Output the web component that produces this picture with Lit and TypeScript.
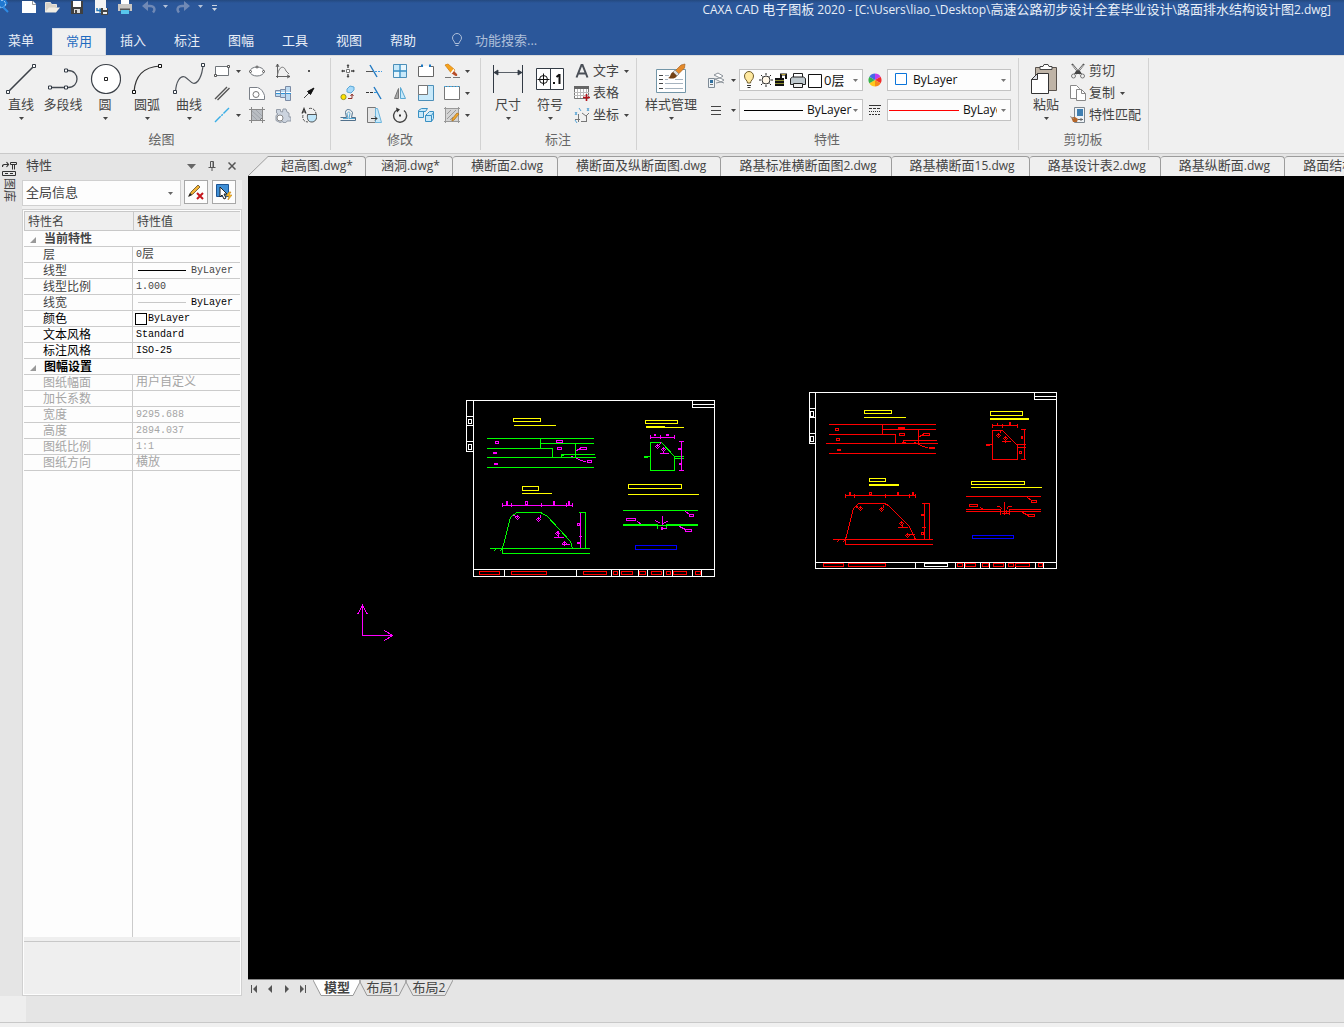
import { LitElement, html, svg, css, nothing, type TemplateResult } from "lit";
import { customElement, property } from "lit/decorators.js";

const shared = css`
  * { box-sizing: border-box; }
  button, select, input {
    font: inherit; color: inherit; background: none; border: 0; margin: 0; padding: 0; border-radius: 0;
  }
  select { appearance: none; outline: 0; }
  svg { display: block; flex: none; }
  .lat { font-size: 12px; }
`;

/* Latin runs are set slightly smaller than the CJK text around them. */
const mixed = (text: string) =>
  text.split(/([\x20-\x7e]+)/).filter(Boolean).map((part) =>
    /^[\x20-\x7e]+$/.test(part) ? html`<span class="lat">${part}</span>` : part);

const icon = (w: number, h: number, body: TemplateResult) =>
  html`<svg width=${w} height=${h} viewBox="0 0 ${w} ${h}" fill="none" stroke="#555" aria-hidden="true">${body}</svg>`;

const caret = (color = "#444") =>
  html`<svg class="caret" width="5" height="3" viewBox="0 0 5 3" aria-hidden="true"><path d="M0 0h5L2.500 3z" fill=${color}/></svg>`;

/* ---------- large icons, 32 x 32 ---------- */
const bigIcons: Record<string, TemplateResult> = {
  line: svg`<path d="M3 30L30 3" stroke="#3c4148" stroke-width="1.600"/><path d="M1.500 28.500h3v3h-3zM27.500 2.500h3v3h-3z" fill="#fff" stroke="#333b45"/>`,
  polyline: svg`<path d="M4 25.500h15M19 8.500h2c12 0 12 17 0 17h-2" stroke="#444a52" stroke-width="1.300"/><path d="M1.500 24h3v3h-3zM17.500 24h3v3h-3zM17.500 7h3v3h-3z" fill="#fff" stroke="#333b45"/>`,
  circle: svg`<circle cx="17" cy="17" r="14.500" fill="#fff" stroke="#3c4148" stroke-width="1.200"/><path d="M15.500 15.500h3v3h-3z" stroke="#222"/>`,
  arc: svg`<path d="M3 30C4 15 12 5 29 4" stroke="#333" stroke-width="1.200"/><path d="M1.500 28.500h3v3h-3zM27.500 2.500h3v3h-3z" fill="#fff" stroke="#111"/>`,
  spline: svg`<path d="M2.500 30C3 20 7 13 12 15c5 3 8 10 13 4 4-5 4-9 5-15" stroke="#50555c" stroke-width="1.200"/><path d="M.5 28.500h3v3h-3zM28.500 1.500h3v3h-3z" fill="#fff" stroke="#333b45"/>`,
  dimension: svg`<path d="M1.500 3v28M30.500 3v28" stroke="#333b45"/><path d="M2 10.500h28M6 8l-4 2.500 4 2.500zM26 8l4 2.500-4 2.500z" fill="#333b45" stroke="#333b45" stroke-width=".8"/>`,
  symbol: svg`<path d="M2.500 6.500h27v21h-27zM16.500 6.500v21" fill="#fff" stroke="#333b45"/><circle cx="9.500" cy="17.500" r="4" stroke="#111"/><path d="M3.500 17.500h12M9.500 11.500v12" stroke="#111"/><path d="M19 20h2v2h-2z" fill="#111" stroke="none"/><path d="M25.500 12v10M25.500 12.500l-3 2.500" stroke="#111" stroke-width="2"/>`,
  style: svg`<path d="M1.500 7.500h29v23h-29z" fill="#fff" stroke="#7396a8"/><path d="M4 13.500h4M4 17.500h4M4 21.500h4M4 26.500h4" stroke="#444"/><path d="M10 13.500h4M10 17.500h3M20 17.500h8M10 21.500h18M10 26.500h18" stroke="#a6b3bf"/><path d="M20 9l6-6 4-1-.5 4-6 6z" fill="#e58a2a" stroke="#9b5a1d" stroke-width=".6"/><path d="M20 8l4 4-2 2-4-4z" fill="#ddd" stroke="#777" stroke-width=".6"/><path d="M18 10l4 4c-2 3-5 3-9 2 3-1 2-5 5-6z" fill="#744217" stroke="none"/>`,
  paste: svg`<path d="M5.500 5.500h21v23h-21z" fill="#bfb4a7" stroke="#59524c"/><path d="M10 7.500V4.500h3l1-2h4l1 2h3v3z" fill="#fff" stroke="#444"/><path d="M7.500 11.500H18.500v20H1.500V17.500z" fill="#fff" stroke="#333"/><path d="M7.500 11.500v6h-6z" fill="#dcdfe6" stroke="#333"/>`,
};

/* ---------- small icons, 16 x 16 ---------- */
const smallIcons: Record<string, TemplateResult> = {
  rect: svg`<path d="M1.500 3.500h13v9h-13z" fill="#fff" stroke="#70757a"/><path d="M.5 11.500h2v2h-2zM13.500 2.500h2v2h-2z" fill="#fff" stroke="#555"/>`,
  ellipse: svg`<ellipse cx="8" cy="8.500" rx="7" ry="4.500" fill="#fff" stroke="#70757a"/><circle cx="1.500" cy="8.500" r="1" fill="#fff"/><circle cx="14.500" cy="8.500" r="1" fill="#fff"/><circle cx="8" cy="4" r="1" fill="#fff"/>`,
  formula: svg`<path d="M2.500 1v14M1 13.500h14M2.500 1l-1.500 3M2.500 1l1.500 3M15 13.500l-3-1.500M15 13.500l-3 1.500" stroke="#555" stroke-width=".9"/><path d="M2.500 12C4 3 9 2 11 8l3 3" stroke="#777"/>`,
  point: svg`<path d="M7 7h2v2H7z" fill="#555" stroke="none"/>`,
  parallel: svg`<path d="M1 14L13 2M3.500 15L15.500 3" stroke="#555" stroke-width="1.400"/>`,
  hole: svg`<path d="M.5 14.500v-12h8c4 1 6 5 7 8v4z" fill="#fff" stroke="#7b8088"/><circle cx="7" cy="9.500" r="3" stroke="#777"/>`,
  shaft: svg`<path d="M.5 5.500h5v-1h5v-3h5v14h-5v-3h-5v-1h-5z" fill="#bcd9f0" stroke="#7b8ba5"/><path d="M1 8.500h15" stroke="#2c93d8"/><path d="M1 7.500h15" stroke="#fff"/><path d="M5.500 5v7M10.500 3v11" stroke="#7b8ba5"/>`,
  arrow: svg`<path d="M3 13l7-7" stroke="#444"/><path d="M13 3L6.500 6.500l3 3z" fill="#111" stroke="#111"/>`,
  centerline: svg`<path d="M1 15L15 1" stroke="#3aaee6" stroke-width="1.400" stroke-dasharray="8 1 2 1"/>`,
  hatch: svg`<path d="M2.500 2.500h11v8l-3 3h-8z" fill="#b9bdc2" stroke="#777"/><path d="M0 2.500h16M2.500 0v16M13.500 0v16M0 13.500h16" stroke="#888"/><path d="M3 4l9 8M7 3l6 6M3 8l5 5" stroke="#9fa4ab"/>`,
  gear: svg`<path d="M1.500 2.500h4v2l2 .5.500-3h3l1 3 2 1v4h2v4h-4l-1 1.500H8v-1l-3 1-4-2V8.500l2-1.500-1.500-1z" fill="#ccd4df" stroke="#949ca8"/><circle cx="5" cy="11" r="3" fill="#fff" stroke="#888"/>`,
  partial: svg`<path d="M6.500 7.500h9c1 5-2 7.500-4.500 7.500-4 0-5-3-4.500-7.500z" fill="#bfe6fa" stroke="#444" stroke-width=".9"/><path d="M2 8c-1 4 1 7 5 7M8 1.500c4-1 7 2 7 6" stroke="#555" stroke-dasharray="3 1"/><path d="M1 6.500l2-5 2 5M2 5h2" stroke="#333" stroke-width="1.200"/>`,
  move: svg`<path d="M6.500 6.500h3v3h-3z" fill="#fff" stroke="#777"/><path d="M8 2v3M8 11v3M2 8h3M11 8h3" stroke="#444" stroke-width="1.400"/><path d="M6.500 3L8 1l1.500 2zM6.500 13L8 15l1.500-2zM3 6.500L1 8l2 1.500zM13 6.500L15 8l-2 1.500z" fill="#444" stroke="none"/>`,
  trim: svg`<path d="M0 8.500h7" stroke="#555"/><path d="M9 8.500h7" stroke="#419be2" stroke-dasharray="2 1"/><path d="M4 2l7 12" stroke="#1f78c1" stroke-width="1.400"/>`,
  array: svg`<path d="M1.500 1.500h13v13h-13z" fill="#c8e9fa" stroke="#4c8fb8"/><path d="M9 2h5v5H9zM2 9h5v5H2z" fill="#e8f6fd" stroke="none"/><path d="M8 1v14M1 8h14" stroke="#398fc4" stroke-width="1.300"/>`,
  breakline: svg`<path d="M3 3.500H.5v10h15v-10H13" fill="#fff" stroke="#666"/><path d="M3 4V1.500h2V4zM11 4V1.500h2V4z" fill="#1f78c1" stroke="none"/><path d="M6 3.500h4" stroke="#fff"/>`,
  erase: svg`<path d="M1 2l3-1 7 6-3 4z" fill="#f6a31d" stroke="#d68213" stroke-width=".8"/><path d="M10 8l3 3c1 2-1 3-3 1l-3-2z" fill="#b84d28" stroke="none"/><path d="M10 6.500l-3 4" stroke="#fff" stroke-width="1.500"/><path d="M1 14.500h6M9 14.500h7" stroke="#777"/>`,
  copy: svg`<circle cx="3.500" cy="12" r="2.600" fill="#ffe100" stroke="#93932a"/><path d="M7 4l3-3 4 1v3l-3 3-4-1z" fill="#a6dafa" stroke="#5ba8d8"/><path d="M8 13.500h4V10M10.500 11l1.500-2 1.500 2" stroke="#8f302b"/>`,
  extend: svg`<path d="M0 7.500h8" stroke="#333" stroke-dasharray="3 1"/><path d="M8 2l7 12" stroke="#1f78c1" stroke-width="1.400"/><path d="M8 7.500h3" stroke="#3597dc"/>`,
  mirror: svg`<path d="M6.500 3.500v10H2.500z" fill="#aaa" stroke="#777"/><path d="M8.500 2.500v11h5z" fill="#c8e9fa" stroke="#58a8d3"/>`,
  scale: svg`<path d="M.5 .5h15v15h-15z" fill="#c8e9fa" stroke="#4c8fb8"/><path d="M.5 .5h9v9h-9z" fill="#fff" stroke="#777"/>`,
  boundary: svg`<path d="M.5 1.500h15v13h-15z" fill="#fff" stroke="#777"/><path d="M0 1.500h16" stroke="#4ca8dd" stroke-dasharray="2 1"/>`,
  offset: svg`<path d="M.5 13.500h15v-3h-4l1-5c-2-4-7-4-7 0l1 5h-6" stroke="#51708b"/><path d="M3 11.500h5l-1-5c1-2 3-2 3 0l-1 5h6" stroke="#58a8d3"/>`,
  stretch: svg`<path d="M1.500 .5h8v15h-8z" fill="#e5e5e5" stroke="#777"/><path d="M9.500 1.500h2l4 14h-6z" fill="#c8e9fa" stroke="#6cb4dc"/><path d="M5 11.500h6M9 9.500l2 2-2 2" stroke="#333"/>`,
  rotate: svg`<path d="M12 3.500a6.500 6.500 0 1 1-7-.5" stroke="#444" stroke-width="1.400"/><path d="M4 .5l4 2-3 3z" fill="#333" stroke="none"/><path d="M7 7.500h2v2H7z" fill="#333" stroke="none"/>`,
  explode: svg`<path d="M.5 3.500l3-2h6l-2 3h-7zM.5 4.500h5v6h-5zM9.500 6.500l2-2h4v7l-2 3h-6v-6z" fill="#c8e9fa" stroke="#3990c3"/><path d="M7.500 8.500h6v6M13.500 8.500l2-3" stroke="#3990c3"/>`,
  editHatch: svg`<path d="M1.500 1.500h13v13h-13z" fill="#d3d3d3" stroke="#777"/><path d="M0 1.500h16M0 14.500h16M1.500 0v16M14.500 0v16" stroke="#999"/><path d="M3 7l4-4M3 12l9-9M6 13l3-3" stroke="#999"/><path d="M8 12l5-6 2 1-5 6-2 1z" fill="#f3a72a" stroke="#a97423" stroke-width=".8"/>`,
  text: svg`<path d="M2.500 14.500L7.500 2h1l5 12.500M4.500 10.500h7" stroke="#4a4f57" stroke-width="2"/>`,
  grid: svg`<path d="M.5 1.500h14v12h-14z" fill="#fff" stroke="#777"/><path d="M0 1h15v3H0z" fill="#666" stroke="none"/><path d="M3.500 4v9M6.500 4v9M9.500 4v9M12.500 4v9M0 7.500h15M0 10.500h15" stroke="#bbb"/><path d="M12.500 9v7M9 12.500h7" stroke="#b3141b" stroke-width="1.600"/>`,
  coords: svg`<path d="M4.500 7v8M1 12.500h5M8 6l4 3 3-3M12.500 9v6M7 14.500h6" stroke="#777"/><path d="M1 5l2 3M3 5L1 8M5 1l2 3M13 1l2 3M15 1l-2 3M1 13l2 3" stroke="#55a3d5"/>`,
  layers: svg`<path d="M6 3l4-2 5 3-3 2zM7 7l5-1 4 2-3 2zM8 11l5-1 3 1" fill="#fff" stroke="#8b9299"/><path d="M.5 6.500h6v9h-6z" fill="#edf3f7" stroke="#7f8b96"/><path d="M2 8h3v3H2z" fill="#2f6f9f" stroke="none"/><path d="M2 12.500h3" stroke="#777"/>`,
  weights: svg`<path d="M3 4.500h10M3 8.500h10M3 12.500h10" stroke="#444" stroke-width="1.200"/>`,
  linetypes: svg`<path d="M2 3.500h12" stroke="#333"/><path d="M2 6.500h12" stroke="#333" stroke-dasharray="3 1"/><path d="M2 9.500h12" stroke="#333" stroke-dasharray="1 1"/><path d="M2 12.500h12" stroke="#333" stroke-dasharray="2 1"/>`,
  wheel: svg`<g stroke="none"><path d="M8 8V1.500A6.500 6.500 0 0 1 13.600 4.700z" fill="#c03cf0"/><path d="M8 8l5.600-3.300a6.500 6.500 0 0 1 0 6.600z" fill="#f22b2b"/><path d="M8 8l5.600 3.300A6.500 6.500 0 0 1 8 14.500z" fill="#f78a1b"/><path d="M8 8v6.500a6.500 6.500 0 0 1-5.600-3.200z" fill="#ffc91a"/><path d="M8 8l-5.600 3.300a6.500 6.500 0 0 1 0-6.600z" fill="#35b44a"/><path d="M8 8L2.400 4.700A6.500 6.500 0 0 1 8 1.500z" fill="#4468e8"/></g>`,
  cut: svg`<path d="M2 1l8 10M14 1L6 11" stroke="#555" stroke-width="2"/><path d="M2.500 2l6 7M13.500 2l-6 7" stroke="#eee" stroke-width=".8"/><circle cx="3.500" cy="13" r="2" stroke="#777"/><circle cx="12.500" cy="13" r="2" stroke="#777"/><path d="M6 8l2-1 2 1 2 3H4z" fill="#444" stroke="none"/>`,
  duplicate: svg`<path d="M.5 .5h6l3 3v10h-9z" fill="#fff" stroke="#888"/><path d="M6.500 4.500h5l4 4v7h-9z" fill="#fff" stroke="#888"/><path d="M11.500 4.500v4h4" stroke="#888"/>`,
  match: svg`<path d="M4.500 .5h10v15h-10z" fill="#eef3f7" stroke="#7b858e"/><path d="M7 2h6v7H7z" fill="#3f7fb2" stroke="none"/><path d="M8 12.500h5M11 11v3" stroke="#666"/><path d="M1 10l4 0 3 2-1 3-4 0z" fill="#b4662a" stroke="none"/><path d="M0 9.500l4 2" stroke="#999"/>`,
};

const big = (name: string) => icon(32, 32, bigIcons[name]);
const small = (name: string) => icon(16, 16, smallIcons[name]);

/* ---------- title bar and ribbon ---------- */
@customElement("ribbon-bar")
class RibbonBar extends LitElement {
  static styles = [shared, css`
    :host { display: block; color: #444; background: #f0f0f0; }
    .top { background: #2b579a; color: #e8eef7; }
    .title { display: flex; height: 27px; overflow: hidden; padding-right: 13px; background: linear-gradient(#24497f, #2b579a 3px); }
    .quick { flex: 1; }
    .title h1 { margin: 0; font-size: 13px; line-height: 18px; font-weight: 400; white-space: nowrap; }
    .menu { display: flex; height: 28px; }
    .menu button { width: 54px; height: 28px; padding-bottom: 4px; }
    .menu .first { width: 42px; margin-right: 10px; }
    .menu .on { background: #f0f0f0; color: #1e6bc0; border: 1px solid #d5dbe4; border-bottom: 0; margin-top: 1px; height: 27px; padding-bottom: 4px; }
    .search { display: flex; align-items: center; gap: 11px; margin-left: 20px; padding-bottom: 2px; color: #aebfd9; flex: 1; }
    .search input { width: 160px; outline: 0; }
    .search input::placeholder { color: #aebfd9; opacity: 1; }
    .ribbon { display: flex; height: 99px; border-top: 1px solid #dadbdc; border-bottom: 1px solid #c9c9c9; padding-top: 2px; }
    .group { display: flex; flex-direction: column; height: 92px; border-right: 1px solid #d2d2d2; padding: 0 7px 0 6px; }
    .group:first-child { padding-left: 0; }
    .group.icons { padding: 0 15px 0 4px; }
    .group h2 { margin: 0; font-size: 13px; font-weight: 400; line-height: 20px; color: #666; text-align: center; margin-top: 1px; }
    .tools { display: flex; height: 70px; }
    .big { width: 42px; height: 70px; display: flex; flex-direction: column; align-items: center; padding-top: 4px; line-height: 20px; white-space: nowrap; }
    .big .caret { margin: 3px 0 0; }
    .big.wide { width: 56px; }
    .grid { display: grid; grid-template-columns: repeat(5, 26px); grid-template-rows: repeat(3, 22px); padding-top: 2px; align-items: center; }
    .grid button { display: flex; align-items: center; gap: 5px; height: 22px; padding-left: 5px; white-space: nowrap; }
    .draw { grid-template-columns: 35px repeat(3, 26px); }
    .draw button { padding-left: 4px; gap: 6px; }
    .list { display: flex; flex-direction: column; padding: 2px 0 0 3px; }
    .list button { display: flex; align-items: center; height: 22px; gap: 3px; white-space: nowrap; line-height: 18px; }
    .list span { padding-bottom: 3px; }
    .list .caret { margin-left: 2px; }
    .props { display: grid; grid-template-columns: 31px 124px 24px 124px; align-content: start; row-gap: 8px; padding: 11px 0 0 9px; height: 70px; }
    .props > * { height: 22px; }
    .props button { display: flex; align-items: center; gap: 7px; }
    .props .mid { justify-content: center; }
    .combo { display: flex; align-items: center; border: 1px solid #c3c3c3; background: #fdfdfd; color: #111; padding: 0 4px; overflow: hidden; }
    .combo select { flex: 1; min-width: 0; padding: 0 0 1px 3px; height: 20px; font-size: 12px; }
    .combo .clip { max-width: 37px; }
    .combo .caret { margin-left: auto; }
    .combo .full { font-size: 13px; padding-left: 2px; }
  `];

  big(name: string, label: string, arrow = true, wide = false) {
    return html`<button class="big ${wide ? "wide" : ""}">${big(name)}<span>${label}</span>${arrow ? caret() : nothing}</button>`;
  }
  small(name: string, label: string, arrow = false) {
    return html`<button title=${label} aria-label=${label}>${small(name)}${arrow ? caret() : nothing}</button>`;
  }
  row(name: string, label: string, arrow = false) {
    return html`<button>${small(name)}<span>${label}</span>${arrow ? caret() : nothing}</button>`;
  }

  render() {
    const tabs = ["插入", "标注", "图幅", "工具", "视图", "帮助"];
    return html`
      <header class="top">
        <div class="title">
          <div class="quick">
            <svg width="220" height="16" viewBox="0 0 220 16" fill="none" role="img" aria-label="快速启动工具栏">
              <path d="M0 0h6l2 3-3 4-5 2z" fill="#1f78d1"/><circle cx="2" cy="4" r="3.500" stroke="#bfe1ff" stroke-dasharray="2 1"/><path d="M3 7l5 5" stroke="#2d8be6" stroke-width="2"/>
              <path d="M22 1h11l3 3v9H22z" fill="#fff"/><path d="M32.500 1v3.500H36" stroke="#999"/>
              <path d="M45.500 12V2.500h5l1 2h5v3" fill="#d8d2c7" stroke="#e8e4dc"/><path d="M45 12.500l4-5h11l-4 5z" fill="#f2eee4"/>
              <path d="M71 1h12v13H71z" fill="#404040"/><path d="M73 1h8v6h-8z" fill="#fff"/><path d="M74 9h6v4h-6z" fill="#ddd"/><path d="M75 10h2v3h-2z" fill="#444"/>
              <path d="M95 0h11v13H95z" fill="#f3f3f3"/><path d="M97 8v2.500h4M99.500 8.500l2 2-2 2" stroke="#2678b8" stroke-width="1.500"/><path d="M101 8h7v7h-7z" fill="#444"/><path d="M103 8h4v2h-4zM103 12h4v2h-4z" fill="#eee"/>
              <path d="M121 0h8v4h-8z" fill="#fff"/><path d="M118 4h14v7h-14z" fill="#c9c6c2"/><path d="M120 9.500h10" stroke="#555" stroke-width="2"/><path d="M121 10h8v4h-8z" fill="#58c6ec"/>
              <g fill="none" stroke="#7089b5" stroke-width="2.400"><path d="M146 6h4c4 0 6 3 3 6.500"/><path d="M186 6h-4c-4 0-6 3-3 6.500"/></g>
              <path d="M142 6l6-5v10zM190 6l-6-5v10z" fill="#7089b5"/>
              <path d="M163 5h5l-2.500 3zM198 5h5l-2.500 3z" fill="#b5c2d8"/>
              <path d="M212 5.500h5" stroke="#ccd4e0"/><path d="M212 8h5l-2.500 3z" fill="#ccd4e0"/>
            </svg>
          </div>
          <h1>${mixed("CAXA CAD 电子图板 2020 - [C:\\Users\\liao_\\Desktop\\高速公路初步设计全套毕业设计\\路面排水结构设计图2.dwg]")}</h1>
        </div>
        <nav class="menu">
          <button class="first">菜单</button>
          <button class="on">常用</button>
          ${tabs.map((t) => html`<button>${t}</button>`)}
          <label class="search">
            <svg width="14" height="14" viewBox="0 0 14 14" fill="none" stroke="#aebfd9" aria-hidden="true"><path d="M5 10.500c0-2-2.500-3-2.500-5.500a4.500 4.500 0 0 1 9 0c0 2.500-2.500 3.500-2.500 5.500zM5.500 12.500h3"/></svg>
            <input type="text" placeholder="功能搜索..." aria-label="功能搜索">
          </label>
        </nav>
      </header>
      <div class="ribbon">
        <section class="group">
          <div class="tools">
            ${this.big("line", "直线")}${this.big("polyline", "多段线", false)}${this.big("circle", "圆")}${this.big("arc", "圆弧")}${this.big("spline", "曲线")}
            <div class="grid draw">
              ${this.small("rect", "矩形", true)}${this.small("ellipse", "椭圆")}${this.small("formula", "公式曲线")}${this.small("point", "点")}
              ${this.small("parallel", "平行线")}${this.small("hole", "孔")}${this.small("shaft", "轴")}${this.small("arrow", "箭头")}
              ${this.small("centerline", "中心线", true)}${this.small("hatch", "剖面线")}${this.small("gear", "齿形")}${this.small("partial", "局部放大图")}
            </div>
          </div>
          <h2>绘图</h2>
        </section>
        <section class="group icons">
          <div class="tools">
            <div class="grid">
              ${this.small("move", "平移")}${this.small("trim", "裁剪")}${this.small("array", "阵列")}${this.small("breakline", "打断")}${this.small("erase", "删除", true)}
              ${this.small("copy", "平移复制")}${this.small("extend", "延伸")}${this.small("mirror", "镜像")}${this.small("scale", "缩放")}${this.small("boundary", "圆角", true)}
              ${this.small("offset", "等距线")}${this.small("stretch", "拉伸")}${this.small("rotate", "旋转")}${this.small("explode", "分解")}${this.small("editHatch", "编辑剖面线", true)}
            </div>
          </div>
          <h2>修改</h2>
        </section>
        <section class="group">
          <div class="tools">
            ${this.big("dimension", "尺寸")}${this.big("symbol", "符号")}
            <div class="list">${this.row("text", "文字", true)}${this.row("grid", "表格")}${this.row("coords", "坐标", true)}</div>
          </div>
          <h2>标注</h2>
        </section>
        <section class="group">
          <div class="tools">
            ${this.big("style", "样式管理", true, true)}
            <div class="props">
              <button aria-label="图层">${small("layers")}${caret()}</button>
              <label class="combo">
                <svg width="78" height="20" viewBox="0 0 78 20" fill="none" stroke="#222" aria-hidden="true">
                  <path d="M3.500 13c0-3-3-3-3-7a4.500 4.500 0 0 1 9 0c0 4-3 4-3 7z" fill="#ffe9a0" stroke="#6e5b2a"/><path d="M3 15.500h4M3.500 17.500h3" stroke="#333"/>
                  <circle cx="22" cy="10" r="4" fill="#fff7e8" stroke="#333"/><path d="M22 3v2M22 15v2M15 10h2M27 10h2M17 5l1.500 1.500M27 5l-1.500 1.500M17 15l1.500-1.500M27 15l-1.500-1.500"/>
                  <path d="M31 8h9v8h-9z" fill="#111" stroke="none"/><path d="M31 10.500h9M31 13.500h9" stroke="#8b8b2f"/><path d="M37 8V4.500h5V9" stroke="#111" stroke-width="2"/><path d="M37.500 4.500h4" stroke="#b9a43a"/>
                  <path d="M49.500 8V3.500h9V8" fill="#fff"/><path d="M46.500 8.500l2-1.500h11l2 1.500v6h-15z" fill="#bfc9ce"/><path d="M49.500 13.500h9v4h-9z" fill="#eee"/>
                  <path d="M64.500 4.500h13v13h-13z" fill="#fff" stroke="#111"/>
                </svg>
                <select class="full" aria-label="图层选择"><option>0层</option></select>${caret("#777")}
              </label>
              <button class="mid" aria-label="颜色">${small("wheel")}</button>
              <label class="combo">
                <svg width="18" height="20" viewBox="0 0 18 20" fill="#fff" stroke="#0a74da" aria-hidden="true"><path d="M3.500 3.500h11v11h-11z"/></svg>
                <select aria-label="颜色选择"><option>ByLayer</option></select>${caret("#777")}
              </label>
              <button aria-label="线宽">${small("weights")}${caret()}</button>
              <label class="combo">
                <svg width="60" height="20" viewBox="0 0 60 20" stroke="#000" aria-hidden="true"><path d="M0 10.500h59"/></svg>
                <select aria-label="线宽选择"><option>ByLayer</option></select>${caret("#777")}
              </label>
              <button class="mid" aria-label="线型">${small("linetypes")}</button>
              <label class="combo">
                <svg width="68" height="20" viewBox="0 0 68 20" stroke="#f00" overflow="visible" aria-hidden="true"><path d="M-3 10.500h70"/></svg>
                <select class="clip" aria-label="线型选择"><option>ByLayer</option></select>${caret("#777")}
              </label>
            </div>
          </div>
          <h2>特性</h2>
        </section>
        <section class="group">
          <div class="tools">
            ${this.big("paste", "粘贴")}
            <div class="list">${this.row("cut", "剪切")}${this.row("duplicate", "复制", true)}${this.row("match", "特性匹配")}</div>
          </div>
          <h2>剪切板</h2>
        </section>
      </div>`;
  }
}

/* ---------- properties palette ---------- */
type Row = { name: string; value?: TemplateResult | string; tone?: string; head?: boolean };

@customElement("property-palette")
class PropertyPalette extends LitElement {
  static styles = [shared, css`
    :host { display: flex; width: 248px; flex: none; background: #e5e5e5; color: #444; }
    .rail { width: 22px; display: flex; flex-direction: column; align-items: center; padding: 7px 4px 0 0; }
    .rail button { display: flex; flex-direction: column; align-items: center; gap: 1px; }
    .rail span { writing-mode: vertical-rl; text-orientation: sideways; font-size: 12px; line-height: 14px; }
    .palette { width: 220px; display: flex; flex-direction: column; background: #efefef; }
    .head { display: flex; align-items: center; height: 26px; padding: 0 6px 2px 4px; gap: 12px; background: #e5e5e5; }
    .head h2 { flex: 1; margin: 0; padding-bottom: 3px; font-size: 13px; line-height: 18px; font-weight: 400; }
    .pick { display: flex; height: 29px; gap: 3px; padding-right: 6px; }
    .pick label { display: flex; flex: 1; align-items: center; height: 26px; background: #fdfdfd; border: 1px solid #d0d0d0; padding: 0 7px 0 3px; font-size: 13px; }
    .pick select { flex: 1; padding-bottom: 2px; }
    .pick button { width: 24px; height: 24px; background: #fdfdfd; border: 1px solid #a8a8a8; display: grid; place-items: center; }
    .pick button + button { margin-left: 1px; }
    .box { flex: 1; display: flex; flex-direction: column; border: 1px solid #d0d0d0; padding: 1px; background: #fdfdfd; font-family: "Noto Sans CJK SC", sans-serif; font-size: 12px; }
    table { border-collapse: separate; border-spacing: 0; table-layout: fixed; width: 100%; line-height: 12px; }
    .c1 { width: 109px; }
    thead th { height: 20px; background: #efefef; font-weight: 400; text-align: left; padding: 0 0 0 3px; border-bottom: 1px solid #c8c8c8; border-top: 1px solid #c8c8c8; border-left: 1px solid #c8c8c8; }
    tbody th, td { height: 16px; padding: 0 0 2px 19px; text-align: left; font-weight: 400; border-bottom: 1px solid #cbcbcb; white-space: nowrap; }
    tbody th { border-right: 1px solid #cbcbcb; }
    tbody th.head-row { border-right: 0; font-weight: 700; padding-left: 6px; }
    .head-row svg { display: inline-block; margin-right: 8px; }
    tbody td { padding: 0 0 0 3px; }
    .val { display: flex; align-items: center; font-family: "Liberation Mono", "Noto Sans CJK SC", monospace; font-size: 10px; height: 14px; }
    .cjk { font-size: 12px; }
    .line { width: 48px; border-top: 1px solid #000; margin: 0 5px 0 2px; }
    .thin { border-color: #c8c8c8; }
    .swatch { width: 12px; height: 12px; border: 1px solid #000; background: #fff; margin: 0 1px 0 -1px; }
    .black { color: #000; }
    .grey { color: #a5a5a5; }
    .rest { flex: 1; border-right: 1px solid #cbcbcb; width: 109px; }
    .note { height: 57px; background: #efefef; padding-top: 4px; }
    .note hr { margin: 0; border: 0; border-top: 1px solid #c8c8c8; }
  `];

  rows: Row[] = [
    { name: "当前特性", head: true },
    { name: "层", value: html`0<span class="cjk">层</span>` },
    { name: "线型", value: html`<i class="line"></i>ByLayer` },
    { name: "线型比例", value: "1.000" },
    { name: "线宽", value: html`<i class="line thin"></i><span class="black">ByLayer</span>` },
    { name: "颜色", value: html`<i class="swatch"></i>ByLayer`, tone: "black" },
    { name: "文本风格", value: "Standard", tone: "black" },
    { name: "标注风格", value: "ISO-25", tone: "black" },
    { name: "图幅设置", head: true, tone: "black" },
    { name: "图纸幅面", value: html`<span class="cjk">用户自定义</span>`, tone: "grey" },
    { name: "加长系数", value: "", tone: "grey" },
    { name: "宽度", value: "9295.688", tone: "grey" },
    { name: "高度", value: "2894.037", tone: "grey" },
    { name: "图纸比例", value: "1:1", tone: "grey" },
    { name: "图纸方向", value: html`<span class="cjk">横放</span>`, tone: "grey" },
  ];

  render() {
    return html`
      <div class="rail">
        <button>
          <svg width="15" height="16" viewBox="0 0 15 16" fill="none" stroke="#333" aria-hidden="true"><path d="M.5 6V4.500L2 3.500h4M4.500 1l2 2.500-2 2.500" stroke-width="1.200"/><path d="M8.500 1.500h6v2h-6zM10.500 3.500v5M12.500 3.500v5M.5 10.500h13v4H.5zM3 12.500h3M8 12.500h3"/></svg>
          <span>图库</span>
        </button>
      </div>
      <div class="palette">
        <div class="head">
          <h2>特性</h2>
          <svg width="9" height="5" viewBox="0 0 9 5" aria-hidden="true"><path d="M0 0h9L4.500 5z" fill="#666"/></svg>
          <svg width="8" height="10" viewBox="0 0 8 10" fill="none" stroke="#555" aria-hidden="true"><path d="M2.500 6V.5h3V6M5 1v5M.5 6.500h7M4 7v3"/></svg>
          <svg width="8" height="8" viewBox="0 0 8 8" stroke="#555" stroke-width="1.500" aria-hidden="true"><path d="M.5.5l7 7M7.500.5l-7 7"/></svg>
        </div>
        <div class="pick">
          <label><select aria-label="对象"><option>全局信息</option></select>${caret("#666")}</label>
          <button aria-label="取消选择"><svg width="16" height="16" viewBox="0 0 16 16" fill="none" aria-hidden="true"><path d="M1 12l2-4 7-7 2 2-7 7z" fill="#f2b234" stroke="#5f4b24" stroke-width=".8"/><path d="M0 13l2-4 2 2z" fill="#222"/><path d="M9 9l6 6M15 9l-6 6" stroke="#c4161c" stroke-width="2"/></svg></button>
          <button aria-label="快速选择"><svg width="16" height="16" viewBox="0 0 16 16" fill="none" aria-hidden="true"><path d="M.5.5h12v12H.5z" fill="#3f8fd6" stroke="#1d5594"/><path d="M4 3l7 7H8l2 4-2 1-2-4-2 2z" fill="#fff" stroke="#222"/><path d="M13 8l-3 4h3l-1 4 4-5h-3l2-3z" fill="#ffc123" stroke="#c57f10" stroke-width=".6"/></svg></button>
        </div>
        <div class="box">
          <table>
            <colgroup><col class="c1"><col></colgroup>
            <thead><tr><th>特性名</th><th>特性值</th></tr></thead>
            <tbody>
              ${this.rows.map((r) => r.head
                ? html`<tr class=${r.tone ?? ""}><th class="head-row" colspan="2"><svg width="6" height="6" viewBox="0 0 6 6" aria-hidden="true"><path d="M6 0v6H0z" fill="#999"/></svg>${r.name}</th></tr>`
                : html`<tr class=${r.tone ?? ""}><th>${r.name}</th><td><div class="val">${r.value}</div></td></tr>`)}
            </tbody>
          </table>
          <div class="rest"></div>
          <div class="note"><hr></div>
        </div>
      </div>`;
  }
}

/* ---------- drawing geometry ---------- */
const rect = (x: number, y: number, x2: number, y2: number) => `M${x} ${y}H${x2}V${y2}H${x}z`;
const h = (y: number, x: number, x2: number) => `M${x - 0.5} ${y}H${x2 + 0.5}`;
const v = (x: number, y: number, y2: number) => `M${x} ${y - 0.5}V${y2 + 0.5}`;
const stroke = (color: string, ...parts: string[]) =>
  svg`<path d=${parts.join("")} stroke=${color} transform="translate(.5 .5)"/>`;
const smallDiamond = (x: number, y: number) => `M${x - 2} ${y}l2-2 2 2-2 2zM${x} ${y}v-2`;

const sheetA = svg`
  ${stroke("#fff", rect(13, 15, 254, 191), h(184, 13, 254), "M13 15H6V66H13", h(31, 6, 13), h(40, 6, 13), h(56, 6, 13),
    rect(8, 34, 11, 38), rect(8, 59, 11, 64), v(232, 15, 22), h(19, 232, 254), h(22, 232, 254),
    ...[44, 116, 151, 159, 178, 187, 203, 212, 232, 241].map((x) => v(x, 184, 190)))}
  ${stroke("#f00", ...[[19, 39], [51, 86], [123, 146], [153, 157], [161, 172], [179, 185], [191, 201], [206, 210], [213, 226], [235, 240]].map(([a, b]) => rect(a, 186, b, 189)))}
  ${stroke("#ff0", rect(53, 33, 80, 36), h(40, 54, 95), rect(185, 35, 217, 38), h(41, 186, 204), h(42, 186, 223),
    rect(62, 101, 78, 105), h(108, 62, 91), rect(168, 99, 221, 103), h(109, 168, 238))}
  ${stroke("#0f0", h(53, 27, 133), h(63, 27, 92), h(58, 80, 133), h(72, 27, 135), h(82, 27, 133), v(80, 53, 63), v(92, 63, 72),
    v(115, 58, 72), h(69, 101, 134), "M101 69v3M100 70h3",
    "M190 56V85H214V71L201 57H190", h(71, 214, 223), h(73, 214, 223), h(71, 184, 190), h(72, 184, 187),
    "M42 163L50 132L56 127H80L87 131L110 156L112 163", h(163, 30, 129), h(168, 42, 129), v(42, 163, 168), v(125, 127, 163), h(127, 119, 125),
    "M33 166l3-3M39 166l3-3", h(125, 163, 237), h(139, 163, 197), h(140, 163, 237), h(139, 206, 237), v(197, 140, 143), v(206, 140, 143))}
  ${stroke("#f0f", rect(35, 56, 38, 58), h(67, 33, 36), h(68, 33, 36), h(78, 34, 37), h(79, 34, 37), rect(96, 55, 102, 57), rect(97, 62, 101, 64),
    rect(120, 62, 126, 64), "M116 65l4-2", rect(127, 75, 131, 77), "M116 73l9 3.500", h(71, 111, 112),
    h(52, 190, 214), v(190, 50, 53), v(200, 50, 53), v(214, 50, 53), rect(194, 49, 195, 50), rect(206, 49, 208, 50),
    v(221, 56, 85), h(56, 219, 223), h(85, 219, 223), rect(218, 63, 220, 64), rect(219, 78, 220, 79),
    smallDiamond(197, 61), smallDiamond(203, 64), "M200 57l-1 3M203 66v2", h(68, 200, 208),
    h(120, 42, 112), ...[42, 51, 81, 106, 112].map((x) => v(x, 118, 121)), rect(46, 116, 47, 119), rect(65, 116, 67, 119), rect(93, 116, 94, 119), rect(108, 116, 109, 119),
    smallDiamond(57, 132), "M53 130l3 1", smallDiamond(78, 134), "M80 129v3", smallDiamond(97, 148), "M98 145v7", h(152, 94, 103), smallDiamond(104, 158), h(159, 102, 109),
    v(120, 128, 162), rect(117, 138, 119, 140), h(157, 117, 119), h(158, 117, 119), h(151, 119, 121),
    rect(166, 133, 175, 135), "M177 136l4 3", rect(229, 129, 233, 131), "M225 126l4 3", rect(225, 144, 231, 146), "M219 141l6 3",
    v(202, 131, 139), "M195 135l5 3M208 135l-5 3M200 143h6M202 141v3M201 141v3")}
  ${stroke("#00f", rect(175, 160, 216, 164))}`;

const sheetB = svg`
  ${stroke("#fff", rect(13, 7, 254, 183), h(177, 13, 254), "M13 7H7V58H13", h(23, 7, 13), h(32, 7, 13), h(48, 7, 13),
    rect(8, 26, 11, 31), rect(8, 51, 11, 56), v(232, 7, 14), h(11, 232, 254), h(14, 232, 254), rect(122, 178, 145, 181),
    ...[113, 153, 162, 178, 187, 203, 213, 233, 241].map((x) => v(x, 177, 182)))}
  ${stroke("#ff0", rect(62, 25, 89, 28), h(32, 62, 103), rect(188, 26, 220, 30), h(33, 188, 226), h(34, 188, 226),
    rect(67, 93, 83, 96), h(99, 67, 96), h(100, 67, 96), rect(169, 96, 222, 99), h(102, 169, 239))}
  ${stroke("#f00", ...[[21, 41], [46, 83], [155, 160], [163, 173], [180, 186], [191, 201], [206, 211], [213, 227], [236, 240]].map(([a, b]) => rect(a, 178, b, 181)),
    h(39, 27, 133), h(44, 80, 133), h(49, 27, 93), h(58, 24, 135), h(68, 27, 133), v(80, 39, 49), v(93, 49, 58), v(116, 44, 58), h(55, 101, 134), "M101 55v3M99 57h4M111 57h2",
    rect(33, 43, 36, 45), rect(34, 53, 37, 55), h(64, 35, 38), h(65, 35, 38), h(42, 96, 102), h(43, 96, 102), rect(97, 48, 102, 50), rect(121, 48, 127, 50), "M117 51l4-2",
    h(62, 127, 132), h(63, 127, 132), "M116 59l9 3.500",
    "M190 44V74H215V60L200 45H190", h(59, 215, 223), h(62, 215, 223), h(59, 184, 190), h(60, 184, 187),
    h(40, 190, 215), v(190, 39, 42), v(200, 39, 42), v(215, 39, 42), v(195, 38, 40), rect(207, 37, 208, 39),
    v(222, 44, 74), h(44, 219, 223), h(74, 219, 223), rect(219, 51, 220, 53), rect(217, 66, 219, 68),
    smallDiamond(196, 50), smallDiamond(203, 53), "M203 55v2M199 45l-2 3", h(56, 200, 208),
    h(110, 43, 113), ...[43, 52, 83, 107, 113].map((x) => v(x, 109, 112)), rect(47, 107, 48, 109), rect(67, 107, 69, 109), rect(95, 107, 96, 109), rect(110, 107, 111, 109),
    "M43 154L51 123L56 118H82L86 120L107 141L113 154", h(154, 31, 130), h(159, 43, 130), v(43, 154, 159), v(127, 118, 154), h(118, 120, 127), v(122, 118, 153),
    "M34 157l3-3M40 157l3-3", rect(119, 129, 121, 130), rect(119, 147, 121, 149), h(142, 120, 123),
    smallDiamond(58, 123), "M54 119v3l2-1", smallDiamond(79, 124), "M81 119v3", smallDiamond(99, 138), "M100 138v4", h(142, 96, 105), smallDiamond(105, 150), h(149, 106, 112),
    h(111, 164, 238), h(124, 164, 197), h(124, 207, 238), h(126, 164, 238), v(198, 124, 129), v(207, 124, 129),
    rect(167, 119, 175, 121), "M178 122l3 2", rect(229, 115, 234, 117), "M225 112l4 3", rect(226, 129, 232, 131), "M220 127l6 3",
    v(202, 117, 129), "M194 121h3l3 3M209 121h-3l-2 3M199 128h7M204 124v4")}
  ${stroke("#00f", rect(170, 150, 211, 153))}`;

/* ---------- document area ---------- */
@customElement("document-area")
class DocumentArea extends LitElement {
  @property({ type: Array }) files: string[] = [];

  static styles = [shared, css`
    :host { display: flex; flex-direction: column; flex: 1; min-width: 0; color: #444; background: #e5e5e5; }
    .tabs { display: flex; height: 22px; overflow: hidden; padding-top: 2px; }
    .tabs button { flex: none; height: 20px; padding: 0 14px 2px 18px; border-top: 1px solid #9c9c9c; border-right: 1px solid #9c9c9c; border-radius: 3px 4px 0 0; background: #efefef; white-space: nowrap; line-height: 16px; }
    .tabs .modified { padding: 0 12px 2px 15px; }
    .tabs svg + .modified { padding-left: 12px; border-radius: 0 4px 0 0; }
    .canvas { flex: 1; position: relative; background: #000; overflow: hidden; }
    .canvas svg { position: absolute; left: 0; top: 0; }
    .layouts { display: flex; height: 17px; border-top: 1px solid #888; padding-left: 3px; }
    .nav { display: flex; align-items: center; gap: 8px; width: 62px; padding-top: 2px; }
    .nav button { width: 8px; height: 8px; }
    .layouts .sheet { position: relative; width: 48px; height: 16px; line-height: 14px; padding-bottom: 4px; margin-right: -2px; }
    .sheet svg { position: absolute; left: 0; top: 0; }
    .sheet span { position: relative; }
    .sheet.on { font-weight: 700; }
  `];

  nav(label: string, d: string) {
    return html`<button aria-label=${label}><svg width="8" height="8" viewBox="0 0 8 8" aria-hidden="true"><path d=${d} fill="#555"/></svg></button>`;
  }

  render() {
    return html`
      <nav class="tabs">
        <svg width="21" height="20" viewBox="0 0 21 20" aria-hidden="true"><path d="M0 20L19 1h2v19z" fill="#efefef"/><path d="M0 20L20 .5h1" fill="none" stroke="#9c9c9c"/></svg>
        ${this.files.map((f) => html`<button class=${f.endsWith("*") ? "modified" : ""}>${mixed(f)}</button>`)}
      </nav>
      <main class="canvas">
        <svg width="1096" height="803" viewBox="0 0 1096 803" fill="none" shape-rendering="crispEdges" role="img" aria-label="图纸">
          <g transform="translate(212 209)">${sheetA}</g>
          <g transform="translate(554 209)">${sheetB}</g>
          ${stroke("#f0f", "M114 429V459H144M109 438L114 429L119 438M136 454L144 459L136 464")}
        </svg>
      </main>
      <div class="layouts">
        <div class="nav">
          ${this.nav("第一个", "M0 0h1v8H0zM6 0v8L2 4z")}${this.nav("上一个", "M5 0v8L1 4z")}${this.nav("下一个", "M2 0v8l4-4z")}${this.nav("最后一个", "M6 0h1v8H6zM1 0v8l4-4z")}
        </div>
        ${["模型", "布局1", "布局2"].map((name, i) => html`
          <button class="sheet ${i === 0 ? "on" : ""}">
            <svg width="48" height="16" viewBox="0 0 48 16" aria-hidden="true"><path d="M0 0L8 15.500H40L48 0" fill=${i === 0 ? "#fff" : "none"} stroke="#999"/></svg>
            <span>${mixed(name)}</span>
          </button>`)}
      </div>`;
  }
}

@customElement("app-root")
class AppRoot extends LitElement {
  static styles = [shared, css`
    :host { display: flex; flex-direction: column; min-height: 100vh; overflow: hidden; background: #e5e5e5; font-family: "Open Sans", "Noto Sans CJK SC", sans-serif; font-size: 13px; }
    .work { display: flex; flex: 1; }
    .foot { height: 31px; display: flex; flex-direction: column; }
    .cmd { flex: 1; width: 26px; background: #eee; }
    .status { height: 5px; border-top: 1px solid #c8c8c8; background: #f0f0f0; }
  `];

  files = ["超高图.dwg*", "涵洞.dwg*", "横断面2.dwg", "横断面及纵断面图.dwg", "路基标准横断面图2.dwg", "路基横断面15.dwg", "路基设计表2.dwg", "路基纵断面.dwg", "路面结构图.dwg"];

  render() {
    return html`
      <ribbon-bar></ribbon-bar>
      <div class="work">
        <property-palette></property-palette>
        <document-area .files=${this.files}></document-area>
      </div>
      <footer class="foot"><div class="cmd"></div><div class="status"></div></footer>`;
  }
}
